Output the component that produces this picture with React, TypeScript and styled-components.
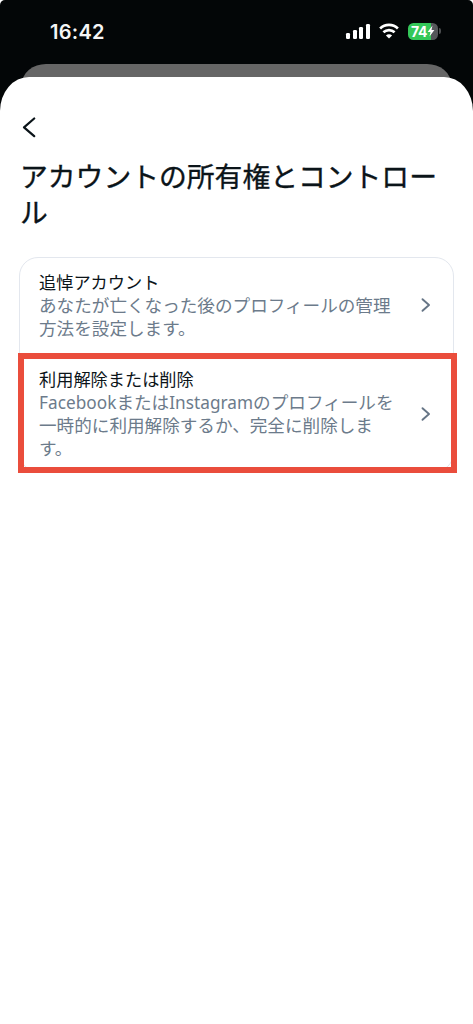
import React from 'react';
import styled, { createGlobalStyle } from 'styled-components';

const Global = createGlobalStyle`
  * { box-sizing: border-box; }
  html, body { margin: 0; background: #fff; }
  body { font-family: "Noto Sans", "Noto Sans CJK JP", sans-serif; }
`;

const Screen = styled.div`
  width: 473px;
  height: 1024px;
  background: linear-gradient(#030607 0 130px, #fff 130px);
  border-radius: 5px 5px 0 0;
  overflow: hidden;
  display: flex;
  flex-direction: column;
`;

const StatusBar = styled.header`
  height: 64px;
  flex: none;
  display: flex;
  align-items: center;
  justify-content: space-between;
  padding: 0 32px 2px 50px;
`;

const Time = styled.span`
  font: 600 20px/24px Inter, sans-serif;
  letter-spacing: 0.25px;
  padding-top: 1px;
  color: #f5f5f5;
`;

const StatusIcons = styled.div`
  display: flex;
  align-items: center;
`;

const Signal = styled.div`
  display: flex;
  align-items: flex-end;
  gap: 2.4px;
  height: 16px;
  margin-right: 9px;
`;

const Bar = styled.span<{ $h: number }>`
  width: 4.2px;
  height: ${(p) => p.$h}px;
  border-radius: 1.3px;
  background: #fff;
`;

const WifiIcon = styled.svg`
  width: 20px;
  height: 16px;
  margin-right: 9px;
`;

const Battery = styled.div`
  display: flex;
  align-items: center;
  justify-content: center;
  width: 30px;
  height: 17px;
  border-radius: 5.5px;
  background: linear-gradient(90deg, #34c759 0 23px, #55575a 23px);
  color: #fff;
  font: 700 14px/17px Inter, sans-serif;
  letter-spacing: -0.4px;
`;

const Bolt = styled.svg`
  width: 8px;
  height: 12px;
  flex: none;
`;

const BatteryTip = styled.span`
  width: 2px;
  height: 6px;
  margin-left: 1px;
  border-radius: 0 2px 2px 0;
  background: #4b4d4f;
`;

const BackSheet = styled.div`
  flex: none;
  height: 28px;
  margin: 0 22px -15.5px;
  background: #666;
  border-radius: 24px 24px 0 0 / 20px 20px 0 0;
`;

const Sheet = styled.main`
  flex: 1;
  background: #fff;
  border-radius: 29px 29px 0 0 / 34px 34px 0 0;
  padding: 40px 19px 0;
`;

const BackButton = styled.button`
  display: block;
  width: 20px;
  height: 22px;
  padding: 0;
  border: 0;
  background: none;
  svg { display: block; }
`;

const Heading = styled.h1`
  margin: 18.5px 0 27.5px 1px;
  color: #0b1419;
  font: 400 27.8px/36px "Noto Sans CJK JP", sans-serif;
  -webkit-text-stroke: 0.35px #0b1419;
`;

const Card = styled.section`
  height: 215px;
  border: 1.5px solid #e3e7ee;
  border-radius: 19px;
`;

const Row = styled.div<{ $height: number }>`
  display: flex;
  align-items: center;
  height: ${(p) => p.$height}px;
  padding: 0 22px 0 19px;
`;

const Highlighted = styled.div`
  width: 439px;
  height: 120px;
  margin-left: -2px;
  border: 6px solid #ea4d3c;

  ${Row} {
    padding: 0 20px 0 15px;
  }
`;

const RowText = styled.div`
  flex: 1;
  white-space: nowrap;
`;

const RowTitle = styled.h2`
  margin: 0;
  color: #0b1419;
  font: 400 17.2px/24px "Noto Sans CJK JP", sans-serif;
`;

const Description = styled.p`
  margin: 0;
  color: #6c7b8b;
  font: 400 17.6px/22.8px "Noto Sans CJK JP", sans-serif;
`;

const Latin = styled.span`
  font-family: "Noto Sans", sans-serif;
  font-size: 17.2px;
  letter-spacing: 0.04px;
  line-height: 1;
`;

const Chevron = () => (
  <svg width="10" height="16" viewBox="0 0 10 16" fill="none" stroke="#667586" strokeWidth="1.9" strokeLinecap="round" strokeLinejoin="round">
    <path d="M1.5 2.2 8 8l-6.500 5.800" />
  </svg>
);

export default function App() {
  return (
    <>
      <Global />
      <Screen>
        <StatusBar>
          <Time>16:42</Time>
          <StatusIcons>
            <Signal>
              {[6, 9, 12, 15.5].map((h) => <Bar key={h} $h={h} />)}
            </Signal>
            <WifiIcon viewBox="0 0 20 16" fill="none" stroke="#fff" strokeWidth="2.7">
              <path d="M1.100 5.400C6 .8 14 .8 18.900 5.400" />
              <path d="M4.400 9.300C7.600 6.400 12.400 6.400 15.600 9.300" />
              <path d="M10 15.500 6.900 12.400C8.700 10.800 11.300 10.800 13.100 12.400Z" fill="#fff" stroke="none" />
            </WifiIcon>
            <Battery>
              74
              <Bolt viewBox="0 0 8 12"><path d="M5.500.5.600 6.900h2.900L2.500 11.500 7.400 5H4.500Z" fill="#fff" /></Bolt>
            </Battery>
            <BatteryTip />
          </StatusIcons>
        </StatusBar>
        <BackSheet />
        <Sheet>
          <BackButton aria-label="戻る">
            <svg width="20" height="22" viewBox="0 0 20 22" fill="none" stroke="#0b1419" strokeWidth="2.2" strokeLinecap="round" strokeLinejoin="round">
              <path d="M15.200 1.500 5 10.300l10.200 8.900" />
            </svg>
          </BackButton>
          <Heading>アカウントの所有権とコントロー<br />ル</Heading>
          <Card>
            <Row $height={95.5}>
              <RowText>
                <RowTitle>追悼アカウント</RowTitle>
                <Description>あなたが亡くなった後のプロフィールの管理<br />方法を設定します。</Description>
              </RowText>
              <Chevron />
            </Row>
            <Highlighted>
              <Row $height={109}>
                <RowText>
                  <RowTitle>利用解除または削除</RowTitle>
                  <Description>
                    <Latin>Facebook</Latin>または<Latin>Instagram</Latin>のプロフィールを<br />
                    一時的に利用解除するか、完全に削除しま<br />す。
                  </Description>
                </RowText>
                <Chevron />
              </Row>
            </Highlighted>
          </Card>
        </Sheet>
      </Screen>
    </>
  );
}
